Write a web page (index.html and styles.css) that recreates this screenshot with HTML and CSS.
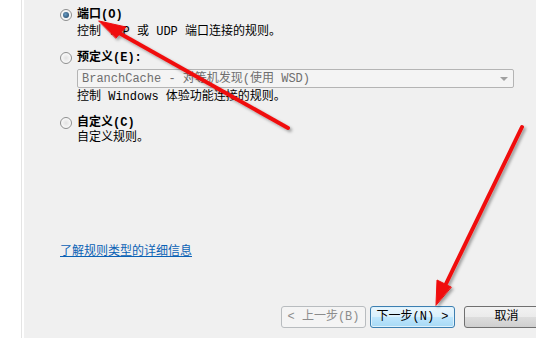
FILE: index.html
```html
<!DOCTYPE html>
<html lang="zh-CN">
<head>
  <meta charset="UTF-8">
  <title>规则类型</title>
  <link rel="stylesheet" href="styles.css">
</head>
<body>
  <div class="window">
    <div class="side"></div>
    <div class="main">
      <!-- rule types -->
      <div class="options">
        <div class="option opt-port">
          <span class="radio checked"></span>
          <div class="text">
            <div class="label">端口(O)</div>
            <div class="desc">控制 TCP 或 UDP 端口连接的规则。</div>
          </div>
        </div>
        <div class="option opt-pre">
          <span class="radio"></span>
          <div class="text">
            <div class="label">预定义(E):</div>
            <div class="select">
              <span>BranchCache - 对等机发现(使用 WSD)</span>
              <span class="caret"></span>
            </div>
            <div class="desc">控制 Windows 体验功能连接的规则。</div>
          </div>
        </div>
        <div class="option opt-custom">
          <span class="radio"></span>
          <div class="text">
            <div class="label">自定义(C)</div>
            <div class="desc">自定义规则。</div>
          </div>
        </div>
      </div>
      <a class="more" href="#">了解规则类型的详细信息</a>
      <!-- wizard buttons -->
      <div class="buttons">
        <button class="btn" disabled>&lt; 上一步(B)</button>
        <button class="btn primary">下一步(N) &gt;</button>
        <button class="btn cancel">取消</button>
      </div>
    </div>
  </div>
  <svg class="arrows" width="536" height="338" viewBox="0 0 536 338">
    <defs>
      <filter id="shade" x="-20%" y="-20%" width="140%" height="140%">
        <feDropShadow dx="2" dy="2" stdDeviation="1.5" flood-color="#000" flood-opacity="0.35"/>
      </filter>
    </defs>
    <g filter="url(#shade)" fill="#f01010" stroke="#f01010" stroke-linecap="round">
      <line x1="288" y1="128" x2="112" y2="29" stroke-width="4"/>
      <polygon points="99,21 126,27 116,38" stroke-width="1"/>
      <line x1="522" y1="127" x2="443" y2="290" stroke-width="4"/>
      <polygon points="436,305 437,280 451,287" stroke-width="1"/>
    </g>
  </svg>
</body>
</html>
```

FILE: styles.css
```css
html {
  font: 12px/14px "Liberation Mono", "Noto Sans CJK SC", monospace;
}
body {
  margin: 0;
  padding: 0;
  width: 536px;
  height: 338px;
  overflow: hidden;
  position: relative;
  background: #fff;
  color: #000;
}
.window {
  display: flex;
  height: 338px;
}
.side {
  flex: none;
  width: 21px;
  border-right: 1px solid #e4e4e4;
  margin-right: 2px;
  background: #fff;
}
.main {
  flex: 1;
  min-width: 0;
  background: #f0f0f0;
  padding: 8px 0 0 36px;
  display: flex;
  flex-direction: column;
}
.option {
  display: flex;
  align-items: flex-start;
}
.radio {
  width: 12px;
  height: 12px;
  border: 1px solid #8e8f8f;
  border-radius: 50%;
  background: radial-gradient(circle, #e2e2e2 0, #fbfbfb 75%);
  margin: 1px 5px 0 0;
  box-sizing: border-box;
  flex: none;
  position: relative;
}
.radio.checked::after {
  content: "";
  position: absolute;
  left: 2px;
  top: 2px;
  width: 6px;
  height: 6px;
  border-radius: 50%;
  background: radial-gradient(circle at 40% 40%, #6a9cc4, #1c3e5c);
}
.text {
  flex: 1;
}
.label {
  font-weight: bold;
  height: 14px;
}
.desc {
  margin-top: 3px;
  height: 14px;
}
.opt-pre {
  margin-top: 12px;
}
.opt-custom {
  margin-top: 12px;
}
.opt-custom .desc {
  margin-top: 1px;
}
.select {
  margin: 4px 0 0 0;
  width: 437px;
  height: 19px;
  box-sizing: border-box;
  border: 1px solid #b4b4b4;
  border-radius: 2px;
  background: #f4f4f4;
  color: #6f6f6f;
  padding: 1px 0 0 4px;
  display: flex;
  justify-content: space-between;
  align-items: center;
}
.opt-pre .desc {
  margin-top: 2px;
}
.caret {
  width: 0;
  height: 0;
  border-left: 4px solid transparent;
  border-right: 4px solid transparent;
  border-top: 4px solid #a0a0a0;
  margin-right: 5px;
}
.more {
  margin: 100px 0 0 0;
  color: #0b62b5;
  text-decoration: underline;
  align-self: flex-start;
  height: 14px;
}
.buttons {
  margin-top: 47px;
  margin-left: 221px;
  display: flex;
  gap: 4px;
}
.btn {
  font: inherit;
  height: 22px;
  width: 85px;
  box-sizing: border-box;
  border: 1px solid #707070;
  border-radius: 3px;
  background: linear-gradient(#f2f2f2, #ebebeb 50%, #dddddd 51%, #cfcfcf);
  color: #000;
  padding: 0;
  flex: none;
}
.btn:disabled {
  border-color: #b8bcbf;
  background: #f4f4f4;
  color: #8c8c8c;
}
.btn.primary {
  border-color: #3c7fb1;
  background: linear-gradient(#eaf6fd, #d9f0fc 50%, #bee6fd 51%, #a7d9f5);
  box-shadow: inset 0 0 0 1px #dff2fc;
}
.btn.cancel {
  margin-left: 5px;
}
.arrows {
  position: absolute;
  left: 0;
  top: 0;
  pointer-events: none;
}
```
